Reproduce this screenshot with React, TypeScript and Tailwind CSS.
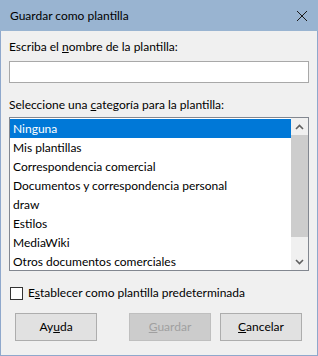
import React from "react";

const items = [
  "Ninguna",
  "Mis plantillas",
  "Correspondencia comercial",
  "Documentos y correspondencia personal",
  "draw",
  "Estilos",
  "MediaWiki",
  "Otros documentos comerciales",
];

export default function App() {
  return (
    <div
      className="w-[318px] h-[356px] flex flex-col bg-[#f0f0f0] text-[12px] text-black"
      style={{ fontFamily: 'Lato, "Noto Sans", sans-serif' }}
    >
      <div className="h-[31px] bg-[#99b4d1] flex items-center justify-between pl-[10px] pr-[10px] shrink-0">
        <span className="text-[12px] leading-none">Guardar como plantilla</span>
        <svg width="12" height="12" viewBox="0 0 12 12">
          <path d="M1 1 L11 11 M11 1 L1 11" stroke="#1a1a1a" strokeWidth="1" />
        </svg>
      </div>
      <div className="flex-1 flex flex-col px-[8px] border border-t-0 border-[#8fa8cc]">
        <div className="mt-[8px] h-[16px] leading-[16px]">
          Escriba el <span className="underline">n</span>ombre de la plantilla:
        </div>
        <div className="mt-[6px] h-[22px] bg-white border border-[#a8a8a8]" />
        <div className="mt-[14px] h-[16px] leading-[16px]">
          Seleccione una <span className="underline">c</span>ategoría para la plantilla:
        </div>
        <div className="mt-[4px] h-[154px] bg-white border border-[#828790] flex">
          <div className="flex-1 flex flex-col pt-[1px]">
            {items.map((it, i) => (
              <div
                key={it}
                className={
                  "h-[19px] leading-[19px] pl-[3px] " +
                  (i === 0 ? "bg-[#0078d7] text-white" : "")
                }
              >
                {it}
              </div>
            ))}
          </div>
          <div className="w-[17px] bg-[#f0f0f0] flex flex-col">
            <div className="h-[17px] flex items-center justify-center">
              <svg width="9" height="6" viewBox="0 0 9 6">
                <path d="M1 5 L4.5 1.5 L8 5" stroke="#606060" strokeWidth="1.6" fill="none" />
              </svg>
            </div>
            <div className="h-[102px] bg-[#cdcdcd]" />
            <div className="flex-1" />
            <div className="h-[17px] flex items-center justify-center">
              <svg width="9" height="6" viewBox="0 0 9 6">
                <path d="M1 1 L4.5 4.5 L8 1" stroke="#606060" strokeWidth="1.6" fill="none" />
              </svg>
            </div>
          </div>
        </div>
        <div className="mt-[14px] flex items-center h-[16px]">
          <div className="w-[13px] h-[13px] bg-white border border-[#333333] ml-[1px]" />
          <span className="ml-[5px]">
            E<span className="underline">s</span>tablecer como plantilla predeterminada
          </span>
        </div>
        <div className="mt-[12px] flex">
          <button className="ml-[6px] w-[82px] h-[28px] bg-[#e1e1e1] border border-[#adadad]">
            Ay<span className="underline">u</span>da
          </button>
          <button className="ml-[32px] w-[82px] h-[28px] bg-[#cccccc] border border-[#bfbfbf] text-[#a0a0a0]">
            <span className="underline">G</span>uardar
          </button>
          <button className="ml-[9px] w-[82px] h-[28px] bg-[#e1e1e1] border border-[#adadad]">
            <span className="underline">C</span>ancelar
          </button>
        </div>
      </div>
    </div>
  );
}
